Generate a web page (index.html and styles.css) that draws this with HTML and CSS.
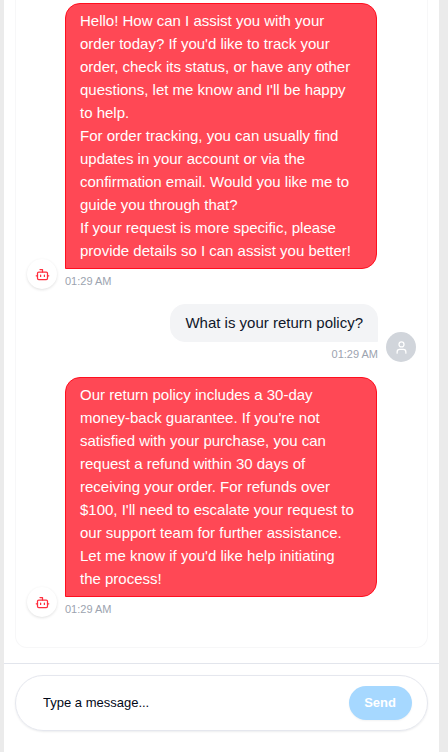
FILE: index.html
```html
<!DOCTYPE html>
<html lang="en">
<head>
<meta charset="utf-8">
<meta name="viewport" content="width=device-width, initial-scale=1">
<title>Chat</title>
<link rel="stylesheet" href="styles.css">
</head>
<body>
<svg class="sprite" aria-hidden="true">
  <symbol id="bot" viewBox="0 0 24 24"><path d="M12 8V4H8"/><rect x="4" y="8" width="16" height="12" rx="2"/><path d="M2 14h2M20 14h2M15 13v2M9 13v2"/></symbol>
  <symbol id="user" viewBox="0 0 24 24"><circle cx="12" cy="7" r="4"/><path d="M19 21v-2a4 4 0 0 0-4-4H9a4 4 0 0 0-4 4v2"/></symbol>
</svg>
<main class="chat">
  <section class="messages" aria-label="Conversation">
    <article class="message">
      <div class="avatar"><svg class="icon"><use href="#bot"/></svg></div>
      <div class="content">
        <div class="bubble">
          <p>Hello! How can I assist you with your order today? If you'd like to track your order, check its status, or have any other questions, let me know and I'll be happy to help.</p>
          <p>For order tracking, you can usually find updates in your account or via the confirmation email. Would you like me to guide you through that?</p>
          <p>If your request is more specific, please provide details so I can assist you better!</p>
        </div>
        <time class="time">01:29 AM</time>
      </div>
    </article>
    <article class="message message-user">
      <div class="avatar"><svg class="icon"><use href="#user"/></svg></div>
      <div class="content">
        <div class="bubble"><p>What is your return policy?</p></div>
        <time class="time">01:29 AM</time>
      </div>
    </article>
    <article class="message">
      <div class="avatar"><svg class="icon"><use href="#bot"/></svg></div>
      <div class="content">
        <div class="bubble">
          <p>Our return policy includes a 30-day money-back guarantee. If you're not satisfied with your purchase, you can request a refund within 30 days of receiving your order. For refunds over $100, I'll need to escalate your request to our support team for further assistance. Let me know if you'd like help initiating the process!</p>
        </div>
        <time class="time">01:29 AM</time>
      </div>
    </article>
  </section>
  <footer class="composer">
    <form class="field">
      <input class="input" type="text" placeholder="Type a message..." aria-label="Type a message">
      <button class="send" type="button">Send</button>
    </form>
  </footer>
</main>
</body>
</html>
```

FILE: styles.css
```css
* {
  box-sizing: border-box;
}

body {
  margin: 0;
  padding: 0 9px 0 4px;
  background: #ebebeb;
  font-family: "Liberation Sans", Arial, sans-serif;
}

p {
  margin: 0;
}

.sprite {
  display: none;
}

.chat {
  display: flex;
  flex-direction: column;
  min-height: 100vh;
  background: #fff;
}

.messages {
  display: flex;
  flex-direction: column;
  gap: 15px;
  margin: 0 11px 15px;
  padding: 3px 11px 30px;
  border: 1px solid #f7f7f8;
  border-top: 0;
  border-radius: 0 0 12px 12px;
}

.message {
  display: flex;
  align-items: flex-end;
  gap: 8px;
}

.message-user {
  flex-direction: row-reverse;
}

.avatar {
  display: flex;
  flex: none;
  align-items: center;
  justify-content: center;
  width: 30px;
  height: 30px;
  border-radius: 50%;
  background: #fff;
  color: #ff2d3d;
  box-shadow: 0 1px 3px rgba(0, 0, 0, 0.12);
}

.message-user .avatar {
  background: #d1d5db;
  color: #fff;
  box-shadow: none;
}

.icon {
  width: 15px;
  height: 15px;
  fill: none;
  stroke: currentColor;
  stroke-width: 2;
  stroke-linecap: round;
  stroke-linejoin: round;
}

.content {
  display: flex;
  flex-direction: column;
  align-items: flex-start;
  max-width: 312px;
}

.message-user .content {
  align-items: flex-end;
}

.bubble {
  padding: 5px 18px 6px 14px;
  border: 1px solid #ff0f1f;
  border-radius: 15px 15px 15px 0;
  background: #ff4855;
  color: #fff;
  font-size: 15px;
  line-height: 23px;
}

.message-user .bubble {
  padding: 6px 14px 7px;
  border-color: #f3f4f6;
  border-radius: 15px 15px 0 15px;
  background: #f3f4f6;
  color: #0f172a;
}

.time {
  margin-top: 4px;
  color: #9ca3af;
  font-size: 11px;
  line-height: 16px;
}

.composer {
  padding: 11px;
  border-top: 1px solid #e2e5ec;
}

.field {
  display: flex;
  align-items: center;
  height: 56px;
  padding: 0 15px 0 27px;
  border: 1px solid #e5e7ee;
  border-radius: 28px;
  box-shadow: 0 1px 2px rgba(15, 23, 42, 0.08);
}

.input {
  flex: 1;
  min-width: 0;
  padding: 0;
  border: 0;
  outline: 0;
  background: none;
  color: #020817;
  font: 13px/20px "Liberation Sans", Arial, sans-serif;
}

.input::placeholder {
  color: #020817;
  opacity: 1;
}

.send {
  height: 34px;
  padding: 0 16px 0 15px;
  border: 0;
  border-radius: 17px;
  background: #a6d8ff;
  color: #fff;
  font: bold 13px/20px "Liberation Sans", Arial, sans-serif;
  box-shadow: 0 1px 2px rgba(0, 0, 0, 0.05);
}
```
